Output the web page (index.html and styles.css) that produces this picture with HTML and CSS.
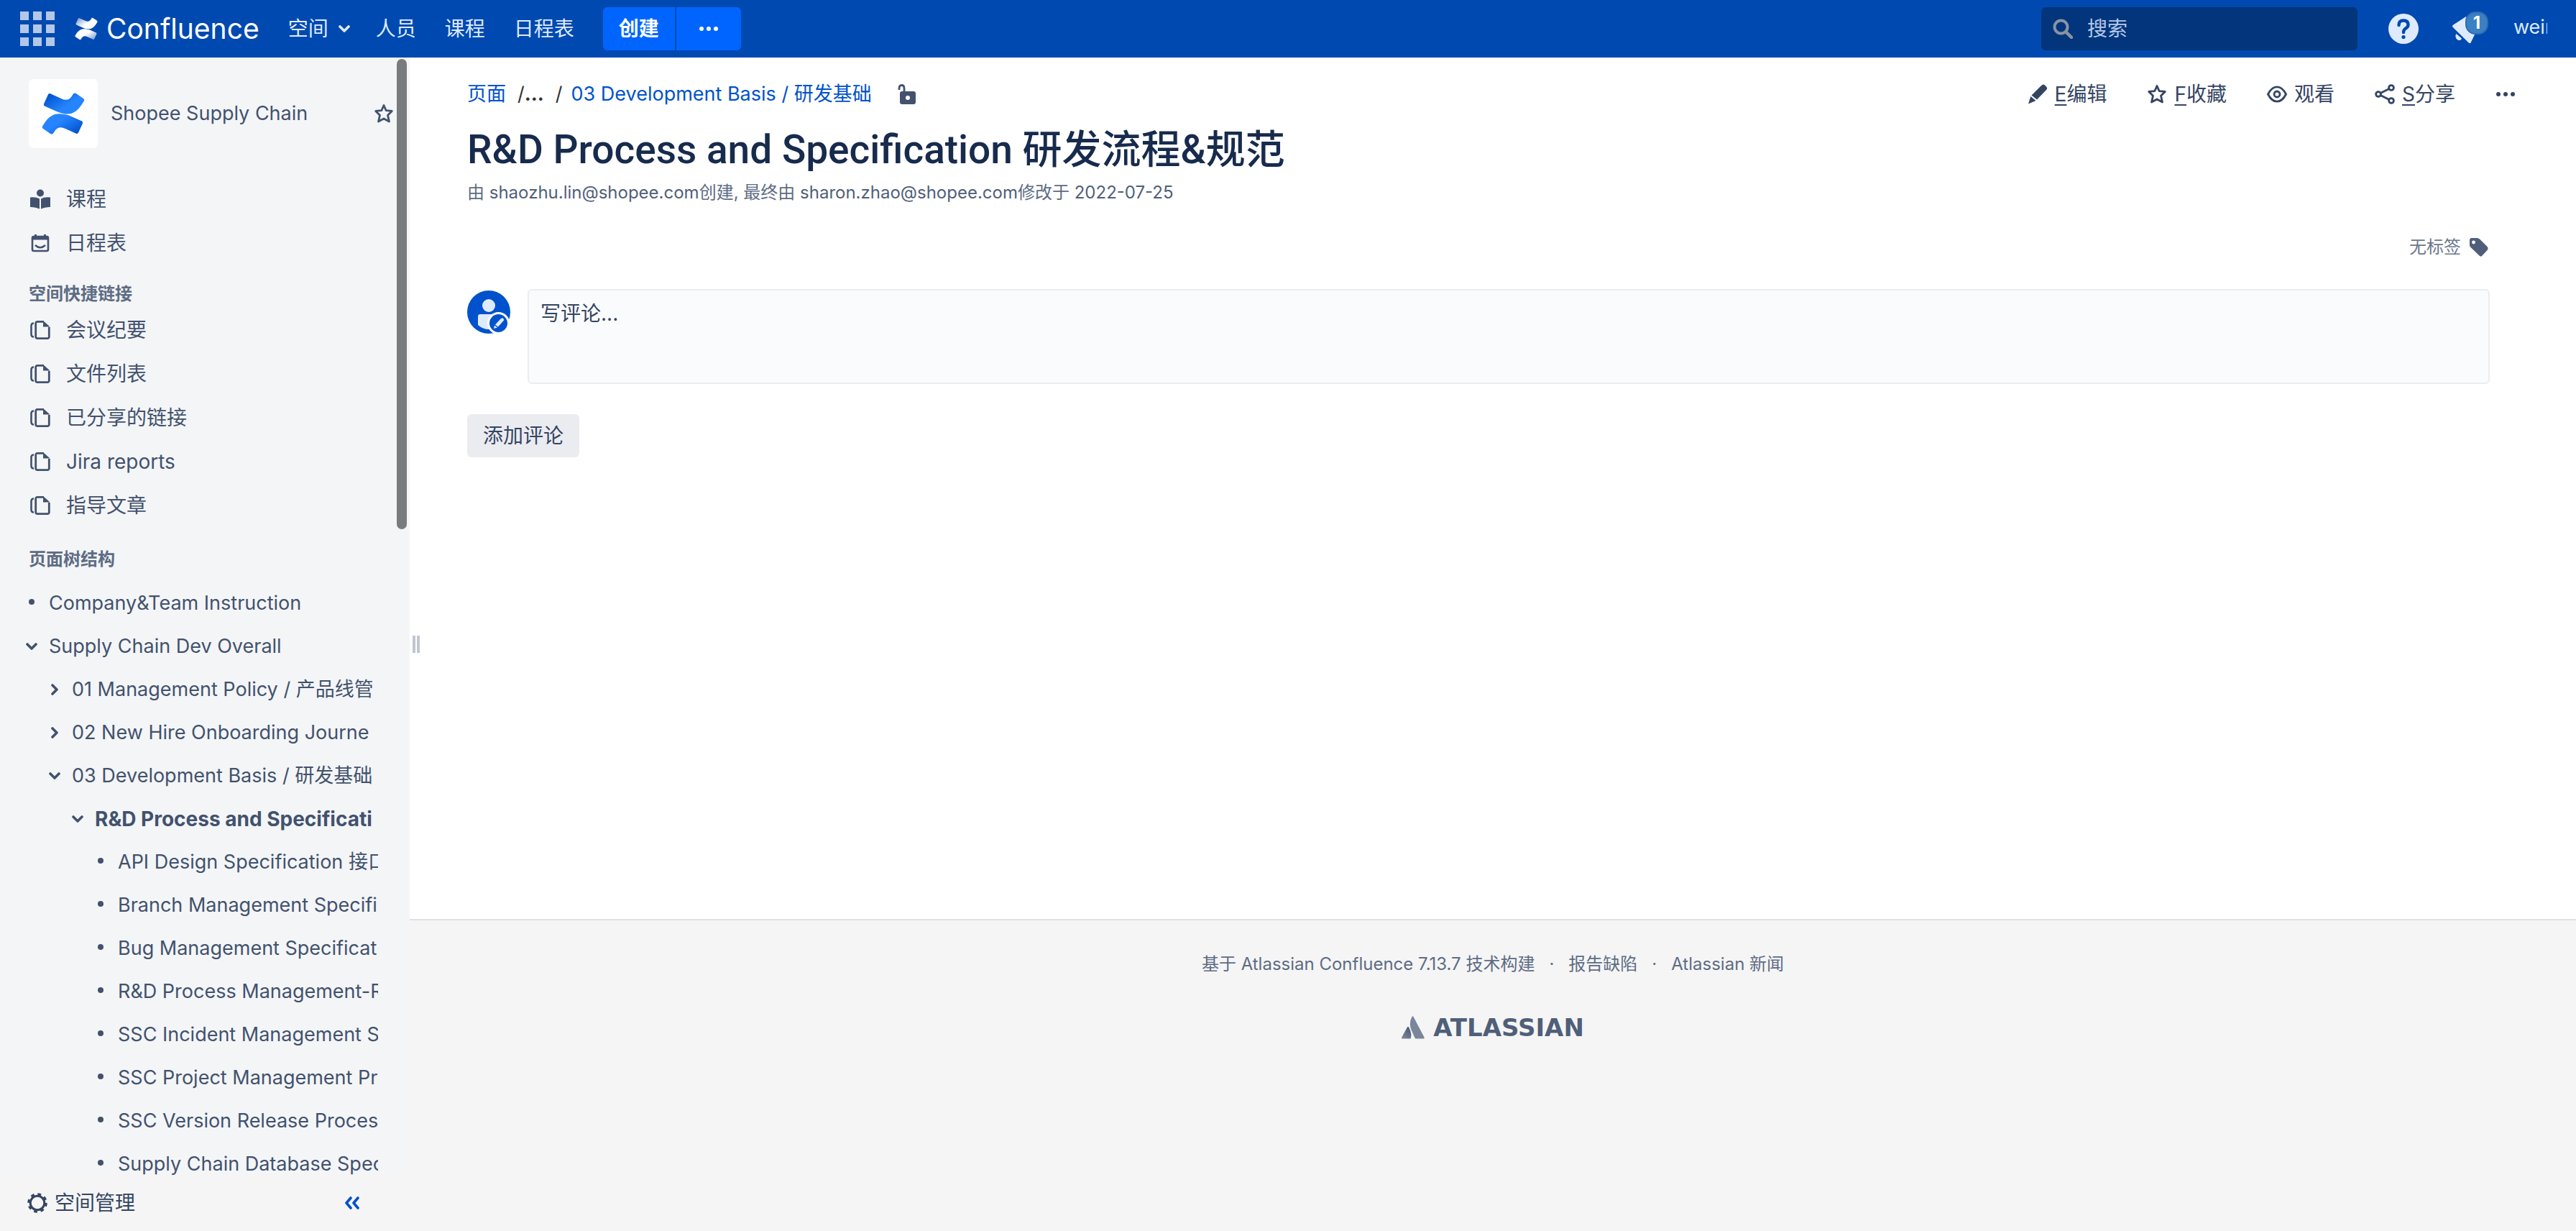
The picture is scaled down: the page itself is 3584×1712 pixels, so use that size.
FILE: index.html
```html
<!DOCTYPE html>
<html lang="zh-CN">
<head>
<meta charset="utf-8">
<title>R&amp;D Process and Specification 研发流程&amp;规范 - Confluence</title>
<link rel="stylesheet" href="styles.css">
</head>
<body>
<svg class="defs" aria-hidden="true">
  <defs>
    <linearGradient id="flow-blue-a" x1="0" y1="0.2" x2="0.8" y2="0.8"><stop offset="0" stop-color="#0052cc"/><stop offset="0.7" stop-color="#2684ff"/></linearGradient>
    <linearGradient id="flow-blue-b" x1="1" y1="0.8" x2="0.2" y2="0.2"><stop offset="0" stop-color="#0052cc"/><stop offset="0.7" stop-color="#2684ff"/></linearGradient>
    <linearGradient id="flow-white-a" x1="0" y1="0.2" x2="0.8" y2="0.8"><stop offset="0" stop-color="#fff" stop-opacity="0.5"/><stop offset="0.6" stop-color="#fff"/></linearGradient>
    <linearGradient id="flow-white-b" x1="1" y1="0.8" x2="0.2" y2="0.2"><stop offset="0" stop-color="#fff" stop-opacity="0.5"/><stop offset="0.6" stop-color="#fff"/></linearGradient>
    <linearGradient id="peak" x1="0.8" y1="0.2" x2="0.2" y2="1"><stop offset="0" stop-color="#505f79"/><stop offset="1" stop-color="#7a869a"/></linearGradient>
    <symbol id="i-pages" viewBox="0 0 28 28"><path d="M5 4.500Q1.500 4.500 1.500 8V20Q1.500 23.500 5 23.500" fill="none" stroke="currentColor" stroke-width="2.600"/><path d="M26.300 10V23.500A2.200 2.200 0 0 1 24 25.700H10A2.200 2.200 0 0 1 7.700 23.500V4.500A2.200 2.200 0 0 1 10 2.300H19" fill="none" stroke="currentColor" stroke-width="2.800"/><path d="M18 1L27.600 9.500H18Z" fill="currentColor"/></symbol>
    <symbol id="i-star" viewBox="0 0 28 28"><path d="M14 2.500L17.200 9.700 25.300 10.400 19.500 16.200 21.500 25 14 20.900 6.500 25 8.500 16.200 2.700 10.400 10.800 9.700Z" fill="none" stroke="currentColor" stroke-width="2.800" stroke-linejoin="round"/></symbol>
    <symbol id="i-down" viewBox="0 0 16 16"><path d="M2 5L8 11 14 5" fill="none" stroke="currentColor" stroke-width="3.600" stroke-linecap="round" stroke-linejoin="round"/></symbol>
    <symbol id="i-right" viewBox="0 0 16 16"><path d="M5 2L11 8 5 14" fill="none" stroke="currentColor" stroke-width="3.600" stroke-linecap="round" stroke-linejoin="round"/></symbol>
    <symbol id="i-dot" viewBox="0 0 16 16"><circle cx="8" cy="6" r="4" fill="currentColor"/></symbol>
    <symbol id="i-more" viewBox="0 0 28 28"><circle cx="4" cy="14" r="3" fill="currentColor"/><circle cx="14" cy="14" r="3" fill="currentColor"/><circle cx="24" cy="14" r="3" fill="currentColor"/></symbol>
    <symbol id="i-pencil" viewBox="0 0 28 28"><path d="M18.500 2.500L21 .8Q22.500 0 24 1.500L26.500 4Q28 5.500 26.500 7.500L13 21.500 5.500 15.500ZM4.300 17L11.500 23 1 27.500Z" fill="currentColor"/></symbol>
  </defs>
</svg>

<header class="topbar">
  <button class="apps" aria-label="应用"><svg viewBox="0 0 48 48"><path d="M0 0h12v12H0zM18 0h12v12H18zM36 0h12v12H36zM0 18h12v12H0zM18 18h12v12H18zM36 18h12v12H36zM0 36h12v12H0zM18 36h12v12H18zM36 36h12v12H36z" fill="#b3c8e8"/></svg></button>
  <a class="brand" href="#"><svg viewBox="0 0 60 58"><path d="M3.200 15L9 2.500Q10 .5 12 1.300L27 8Q36 12.500 41 6L44 1.500Q45.500-.3 47.500 .8L58 8Q60 9.500 58.800 11.500C48 31 37 32.500 22 26.500L4 18.500Q2.300 17.500 3.200 15Z" fill="url(#flow-white-a)"/><path d="M56.800 43L51 55.500Q50 57.500 48 56.700L33 50Q24 45.500 19 52L16 56.500Q14.500 58.300 12.500 57.200L2 50Q0 48.500 1.200 46.500C12 27 23 27.500 38 31.500L56 39.500Q57.700 40.500 56.800 43Z" fill="url(#flow-white-b)"/></svg><span>Confluence</span></a>
  <nav class="mainnav">
    <a href="#">空间 <svg><use href="#i-down"/></svg></a>
    <a href="#">人员</a>
    <a href="#">课程</a>
    <a href="#">日程表</a>
  </nav>
  <div class="create">
    <button class="create-main">创建</button>
    <button class="create-more" aria-label="更多"><svg><use href="#i-more"/></svg></button>
  </div>
  <label class="search"><svg viewBox="0 0 28 28"><circle cx="11.500" cy="11.500" r="9" fill="none" stroke="currentColor" stroke-width="4"/><path d="M18.500 18.500L26 26" stroke="currentColor" stroke-width="4.500" stroke-linecap="round"/></svg><input type="text" placeholder="搜索" aria-label="搜索"></label>
  <button class="help" aria-label="帮助"><svg viewBox="0 0 42 42"><circle cx="21" cy="21" r="21" fill="#deebff"/><path d="M14.500 16Q14.500 9.500 21 9.500T27.500 15.500Q27.500 18.500 24 20.500Q21 22.500 21 26" fill="none" stroke="#0049b0" stroke-width="4.400" stroke-linecap="round"/><circle cx="21" cy="32.500" r="2.600" fill="#0049b0"/></svg></button>
  <button class="notices" aria-label="通知"><svg viewBox="0 0 40 40"><path d="M.6 15L19 3 32 26 25.500 39.500Q24.500 41 23 39.800L.8 18Q-.6 16.300 .6 15ZM5.500 27L13 33.500Q12 36.500 8.500 36 4 34.500 4.500 29Z" fill="#deebff"/></svg><span class="badge">1</span></button>
  <button class="user">wein</button>
</header>

<div class="layout">
  <aside class="sidebar">
    <div class="scroller">
      <div class="space">
        <a class="space-logo" href="#" aria-label="Shopee Supply Chain"><svg viewBox="0 0 60 58"><path d="M3.200 15L9 2.500Q10 .5 12 1.300L27 8Q36 12.500 41 6L44 1.500Q45.500-.3 47.500 .8L58 8Q60 9.500 58.800 11.500C48 31 37 32.500 22 26.500L4 18.500Q2.300 17.500 3.200 15Z" fill="url(#flow-blue-a)"/><path d="M56.800 43L51 55.500Q50 57.500 48 56.700L33 50Q24 45.500 19 52L16 56.500Q14.500 58.300 12.500 57.200L2 50Q0 48.500 1.200 46.500C12 27 23 27.500 38 31.500L56 39.500Q57.700 40.500 56.800 43Z" fill="url(#flow-blue-b)"/></svg></a>
        <a class="space-name" href="#">Shopee Supply Chain</a>
        <button class="fav" aria-label="收藏空间"><svg><use href="#i-star"/></svg></button>
      </div>
      <ul class="links">
        <li><a href="#"><svg viewBox="0 0 28 28"><circle cx="14" cy="5.500" r="5" fill="currentColor"/><path d="M0 11.500Q8 10.500 13 13.500V27.500Q7 24.500 0 25ZM28 11.500Q20 10.500 15 13.500V27.500Q21 24.500 28 25Z" fill="currentColor"/></svg>课程</a></li>
        <li><a href="#"><svg viewBox="0 0 28 28"><path d="M6 2h3v3H6zM19 2h3v3h-3z" fill="currentColor"/><rect x="3" y="5" width="22" height="20" rx="2" fill="none" stroke="currentColor" stroke-width="2.600"/><path d="M3 4.500H25V9.500H3Z" fill="currentColor"/><path d="M7 17Q14 23.500 21 17" fill="none" stroke="currentColor" stroke-width="2.600"/></svg>日程表</a></li>
      </ul>
      <h2 class="group">空间快捷链接</h2>
      <ul class="links">
        <li><a href="#"><svg><use href="#i-pages"/></svg>会议纪要</a></li>
        <li><a href="#"><svg><use href="#i-pages"/></svg>文件列表</a></li>
        <li><a href="#"><svg><use href="#i-pages"/></svg>已分享的链接</a></li>
        <li><a href="#"><svg><use href="#i-pages"/></svg>Jira reports</a></li>
        <li><a href="#"><svg><use href="#i-pages"/></svg>指导文章</a></li>
      </ul>
      <h2 class="group group-tree">页面树结构</h2>
      <ul class="tree">
        <li><a href="#"><svg><use href="#i-dot"/></svg><span>Company&amp;Team Instruction</span></a></li>
        <li><a href="#"><svg><use href="#i-down"/></svg><span>Supply Chain Dev Overall</span></a>
          <ul>
            <li><a href="#"><svg><use href="#i-right"/></svg><span>01 Management Policy / 产品线管</span></a></li>
            <li><a href="#"><svg><use href="#i-right"/></svg><span>02 New Hire Onboarding Journe</span></a></li>
            <li><a href="#"><svg><use href="#i-down"/></svg><span>03 Development Basis / 研发基础</span></a>
              <ul>
                <li><a class="current" href="#"><svg><use href="#i-down"/></svg><span>R&amp;D Process and Specificati</span></a>
                  <ul>
                    <li><a href="#"><svg><use href="#i-dot"/></svg><span>API Design Specification 接口</span></a></li>
                    <li><a href="#"><svg><use href="#i-dot"/></svg><span>Branch Management Specifi</span></a></li>
                    <li><a href="#"><svg><use href="#i-dot"/></svg><span>Bug Management Specificat</span></a></li>
                    <li><a href="#"><svg><use href="#i-dot"/></svg><span>R&amp;D Process Management-R</span></a></li>
                    <li><a href="#"><svg><use href="#i-dot"/></svg><span>SSC Incident Management S</span></a></li>
                    <li><a href="#"><svg><use href="#i-dot"/></svg><span>SSC Project Management Pr</span></a></li>
                    <li><a href="#"><svg><use href="#i-dot"/></svg><span>SSC Version Release Proces</span></a></li>
                    <li><a href="#"><svg><use href="#i-dot"/></svg><span>Supply Chain Database Spec</span></a></li>
                  </ul>
                </li>
              </ul>
            </li>
          </ul>
        </li>
      </ul>
      <div class="scrollbar"></div>
    </div>
    <div class="admin">
      <button class="admin-link"><svg viewBox="0 0 28 28"><circle cx="14" cy="14" r="9.800" fill="none" stroke="currentColor" stroke-width="3"/><circle cx="14" cy="14" r="12.300" fill="none" stroke="currentColor" stroke-width="3" stroke-dasharray="4.830 4.830"/></svg>空间管理</button>
      <button class="collapse" aria-label="折叠"><svg viewBox="0 0 22 18"><path d="M9 2L3 9 9 16M19 2L13 9 19 16" fill="none" stroke="currentColor" stroke-width="3.600" stroke-linecap="round" stroke-linejoin="round"/></svg></button>
    </div>
    <div class="splitter"></div>
  </aside>

  <div class="page">
    <main class="content">
      <div class="toolbar">
        <nav class="crumbs"><a href="#">页面</a><span class="sep">/</span><b>...</b><span class="sep sep-wide">/</span><a href="#">03 Development Basis / 研发基础</a><svg viewBox="0 0 26 28"><path d="M2 8V6Q2 1.500 5.500 1.500T9 6V11" fill="none" stroke="currentColor" stroke-width="2.800"/><rect x="3" y="10" width="22" height="18" rx="3" fill="currentColor"/><circle cx="14" cy="19" r="3" fill="#fff"/></svg></nav>
        <div class="actions">
          <a href="#"><svg><use href="#i-pencil"/></svg><span><u>E</u>编辑</span></a>
          <a href="#"><svg><use href="#i-star"/></svg><span><u>F</u>收藏</span></a>
          <a href="#"><svg viewBox="0 0 28 28"><path d="M1.500 14C5 7 9.500 3.800 14 3.800S23 7 26.500 14C23 21 18.500 24.200 14 24.200S5 21 1.500 14Z" fill="none" stroke="currentColor" stroke-width="2.800"/><circle cx="14" cy="14" r="4" fill="none" stroke="currentColor" stroke-width="2.800"/></svg><span>观看</span></a>
          <a href="#"><svg viewBox="0 0 28 28"><g fill="none" stroke="currentColor" stroke-width="2.800"><circle cx="5" cy="14" r="3.400"/><circle cx="23" cy="5" r="3.400"/><circle cx="23" cy="23" r="3.400"/><path d="M8 12.500L20 6.500M8 15.500L20 21.500"/></g></svg><span><u>S</u>分享</span></a>
          <button aria-label="更多操作"><svg><use href="#i-more"/></svg></button>
        </div>
      </div>
      <h1>R&amp;D Process and Specification 研发流程&amp;规范</h1>
      <p class="byline">由 <a href="#">shaozhu.lin@shopee.com</a>创建, 最终由 <a href="#">sharon.zhao@shopee.com</a>修改于 <a href="#">2022-07-25</a></p>
      <div class="labels"><span>无标签</span><svg viewBox="0 0 26 26"><path d="M0 3Q0 0 3 0H10Q12.500 0 14 1.500L24.500 12Q26.500 14.500 24.500 17L17 25Q15.500 26.500 13.500 24.500L1.500 13Q0 11.500 0 9.500Z" fill="currentColor"/><circle cx="5.500" cy="6" r="2.400" fill="#fff"/></svg></div>
      <div class="comment">
        <svg class="avatar" viewBox="0 0 60 60"><circle cx="30" cy="30" r="30" fill="#0052cc"/><circle cx="30" cy="21" r="9" fill="#deebff"/><path d="M15 36Q15 33 18 33H42Q45 33 45 36V48Q38 54 30 54T15 48Z" fill="#deebff"/><circle cx="43.500" cy="45.500" r="14" fill="#0052cc" stroke="#fff" stroke-width="3"/><path d="M46.500 39.500L49.500 38 51.500 41 43 50.500 39 47.500ZM38 48.500L42 51.500 37 53Z" fill="#deebff"/></svg>
        <textarea aria-label="写评论" placeholder="写评论..."></textarea>
      </div>
      <button class="add">添加评论</button>
    </main>
    <footer class="footer">
      <p><span>基于 <a href="#">Atlassian Confluence</a> 7.13.7 技术构建</span><i>·</i><a href="#">报告缺陷</a><i>·</i><a href="#">Atlassian 新闻</a></p>
      <a class="atlassian" href="#"><svg viewBox="0 0 32 32"><path d="M8 15.500Q9 14 10 15.500 15 25 12.500 31.500H1Q-.5 31.500 .3 29.500Z" fill="url(#peak)"/><path d="M14.500 1Q15.500-.5 16.500 1L31.500 29.500Q32.300 31.500 30.500 31.500H20Q19 31.500 18.500 30.500L13 18Q10 9 14.500 1Z" fill="#7a869a"/></svg><span>ATLASSIAN</span></a>
    </footer>
  </div>
</div>
</body>
</html>
```
FILE: styles.css
```css
* { box-sizing: border-box; }

body {
  margin: 0;
  height: 100vh;
  display: flex;
  flex-direction: column;
  overflow: hidden;
  background: #fff;
  color: #42526e;
  font: 28px/40px Inter, "Noto Sans CJK SC", sans-serif;
}

a { color: inherit; text-decoration: none; }
button { padding: 0; border: 0; background: none; color: inherit; font: inherit; }
ul { margin: 0; padding: 0; list-style: none; }
svg { display: block; flex: none; width: 28px; height: 28px; }
.defs { position: absolute; width: 0; height: 0; }

/* top bar */
.topbar {
  display: flex;
  align-items: center;
  flex: none;
  height: 80px;
  padding: 0 40px 0 28px;
  background: #0049b0;
  color: #deebff;
}
.apps svg { width: 48px; height: 48px; }
.brand { display: flex; align-items: center; gap: 12px; margin-left: 28px; color: #fff; font-size: 39px; }
.brand svg { width: 32px; height: 32px; }
.mainnav { display: flex; gap: 40px; margin-left: 40px; }
.mainnav a { display: flex; align-items: center; gap: 14px; }
.mainnav a:first-child { margin-right: -4px; }
.mainnav svg { width: 16px; height: 16px; }
.create { display: flex; gap: 2px; margin-left: 40px; }
.create button { height: 60px; background: #0065ff; color: #fff; }
.create-main { width: 100px; border-radius: 6px 0 0 6px; font-weight: 600; }
.create-more { display: grid; place-items: center; width: 90px; border-radius: 0 6px 6px 0; }
.search {
  display: flex;
  align-items: center;
  gap: 20px;
  width: 440px;
  height: 60px;
  margin-left: auto;
  padding: 0 16px;
  border-radius: 6px;
  background: #03357c;
  color: #8993a4;
}
.search input { flex: 1; min-width: 0; padding: 0; border: 0; outline: 0; background: none; font: inherit; color: #b3c8e8; }
.search input::placeholder { color: #b3c8e8; opacity: 1; }
.help { margin-left: 43px; }
.help svg { width: 42px; height: 42px; }
.notices { position: relative; margin-left: 47px; }
.notices svg { width: 40px; height: 40px; }
.badge {
  position: absolute;
  top: -4px;
  left: 18px;
  width: 32px;
  height: 32px;
  border: 2px solid #2e6cb0;
  border-radius: 14px;
  background: #3b7fc4;
  color: #fff;
  font-size: 24px;
  font-weight: 700;
  line-height: 28px;
}
.user { width: 47px; margin-left: 45px; padding-bottom: 4px; overflow: hidden; font-size: 27px; text-align: left; white-space: nowrap; }

/* layout */
.layout { display: flex; flex: 1; min-height: 0; }
.sidebar { position: relative; display: flex; flex-direction: column; flex: none; width: 570px; background: #f4f5f7; }
.scroller { position: relative; flex: 1; min-height: 0; overflow: hidden; }
.scrollbar { position: absolute; top: 2px; right: 4px; width: 14px; height: 654px; border-radius: 7px; background: #7a7b7c; }
.splitter { position: absolute; top: calc(50% - 12px); right: -14px; width: 10px; height: 24px; border: solid #c1c7d0; border-width: 0 4px; }

.space { display: flex; align-items: center; padding: 30px 22px 40px 40px; }
.space-logo { display: grid; place-items: center; width: 96px; height: 96px; border-radius: 6px; background: #fff; }
.space-logo svg { width: 60px; height: 58px; }
.space-name { flex: 1; margin-left: 18px; font-size: 27px; }

.links a { display: flex; align-items: center; gap: 22px; height: 61px; padding-left: 42px; }
.group { margin: 22px 0 0; padding-left: 40px; color: #5e6c84; font-size: 24px; font-weight: 600; line-height: 38px; }
.group-tree { margin: 26px 0 12px; }

.tree { padding: 0 52px 0 36px; font-size: 27px; }
.tree ul { padding-left: 32px; }
.tree ul ul { margin-right: -4px; }
.tree a { display: flex; align-items: center; gap: 16px; height: 60px; white-space: nowrap; }
.tree svg { width: 16px; height: 16px; }
.tree span { flex: 1; min-width: 0; overflow: hidden; }
.tree .current { font-size: 28px; font-weight: 700; }

.admin { display: flex; align-items: center; flex: none; height: 78px; padding: 0 69px 0 38px; background: #f5f5f5; color: #344563; }
.admin-link { display: flex; align-items: center; gap: 10px; }
.collapse { margin-left: auto; color: #0052cc; }
.collapse svg { width: 22px; height: 18px; }

/* page */
.page { display: flex; flex-direction: column; flex: 1; min-width: 0; }
.content { flex: none; padding: 31px 80px 0; min-height: 70vh; }
.toolbar { display: flex; align-items: center; justify-content: space-between; height: 40px; }
.crumbs { display: flex; align-items: center; color: #333; font-size: 27px; }
.crumbs a { color: #0052cc; }
.crumbs svg { width: 26px; height: 28px; margin-left: 36px; color: #42526e; }
.sep { margin-left: 16px; }
.sep-wide { margin-right: 12px; }
.actions { display: flex; align-items: center; gap: 56px; padding-right: 4px; color: #344563; }
.actions a { display: flex; align-items: center; gap: 10px; }
.actions u { text-underline-offset: 4px; text-decoration-thickness: 2px; }

h1 { margin: 25px 0 0; color: #172b4d; font-family: Roboto, "Noto Sans CJK SC", sans-serif; font-size: 55px; font-weight: 500; line-height: 64px; }
.byline { margin: 8px 0 0; color: #5e6c84; font-size: 24px; }
.byline a { color: #505f79; }
.labels { display: flex; justify-content: flex-end; align-items: center; gap: 12px; margin-top: 36px; padding-right: 42px; color: #505f79; font-size: 24px; }
.labels svg { width: 26px; height: 26px; }
.labels span { color: #6b778c; }

.comment { display: flex; gap: 24px; margin-top: 38px; padding-right: 40px; }
.avatar { width: 60px; height: 60px; margin-top: 2px; }
.comment textarea {
  flex: 1;
  height: 132px;
  padding: 12px 16px;
  border: 2px solid #ebecf0;
  border-radius: 6px;
  background: #fafbfc;
  font: inherit;
  resize: none;
}
.comment textarea::placeholder { color: #344563; opacity: 1; }
.add { width: 156px; height: 60px; margin-top: 42px; border-radius: 6px; background: #ebecf0; color: #344563; }

.footer { display: flex; flex-direction: column; align-items: center; flex: 1; padding-top: 41px; border-top: 2px solid #dfe1e6; background: #f5f5f5; color: #5e6c84; }
.footer p { display: flex; gap: 20px; margin: 0; font-size: 24px; }
.footer i { font-style: normal; }
.atlassian { display: flex; align-items: center; gap: 12px; margin-top: 48px; color: #505f79; font-family: "DejaVu Sans", sans-serif; font-size: 34px; font-weight: 700; }
.atlassian svg { width: 32px; height: 32px; }
```
